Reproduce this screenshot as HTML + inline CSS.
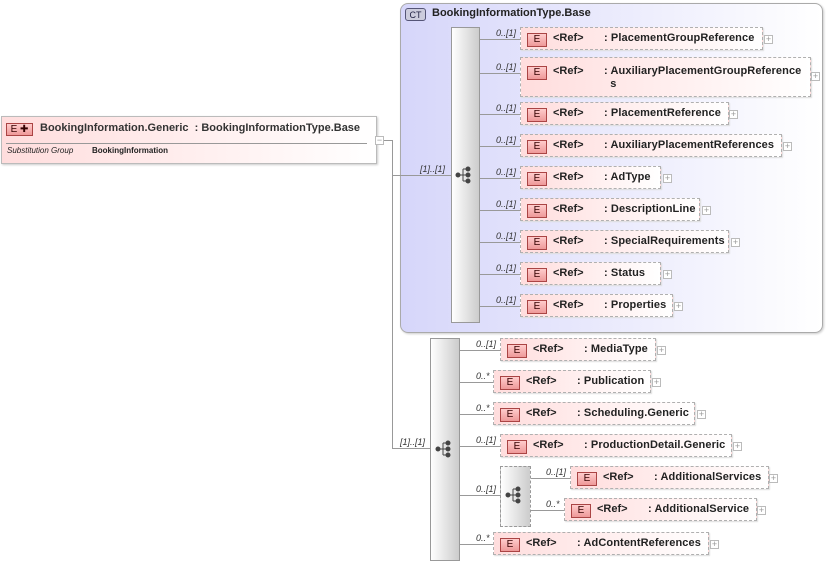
<!DOCTYPE html>
<html><head><meta charset="utf-8"><style>
body{margin:0;width:827px;height:565px;background:#fff;position:relative;overflow:hidden;font-family:"Liberation Sans",Arial,sans-serif;}
div{position:absolute;box-sizing:border-box;}
.l{background:#999;z-index:2;}
.el{border:1px dashed #b0b0b0;background:linear-gradient(90deg,#fdd 0%,#fff 100%);font-size:11px;font-weight:bold;color:#222;height:23px;box-shadow:1px 1px 1px #ddd;}
.el .e{left:6px;top:5px;width:20px;height:14px;border:1px solid #a44;background:linear-gradient(#fcc,#e99);font-size:10px;font-weight:normal;text-align:center;line-height:12px;color:#300;}
.el .r{left:32px;top:4px;}
.el .n{left:83px;top:4px;white-space:nowrap;letter-spacing:0.1px;}
.pl{width:9px;height:9px;border:1px solid #bbb;background:#fff;font-size:9px;line-height:7px;text-align:center;color:#999;z-index:2;}
.c{font-size:9px;font-style:italic;color:#333;white-space:nowrap;z-index:2;}
.seq{border:1px solid #999;background:linear-gradient(90deg,#fff,#ccc);}
</style></head><body>
<!-- main element -->
<div style="left:1px;top:116px;width:376px;height:48px;border:1px solid #bbb;background:linear-gradient(90deg,#fdd,#fff);box-shadow:1px 1px 2px #ccc"></div>
<div style="left:6px;top:123px;width:27px;height:13px;border:1px solid #a44;background:linear-gradient(#fcc,#e99);font-size:10px;text-align:center;line-height:11px;color:#300">E ✚</div>
<div style="left:40px;top:122px;font-size:11px;font-weight:bold;color:#333;white-space:nowrap">BookingInformation.Generic&nbsp; : BookingInformationType.Base</div>
<div style="left:6px;top:143px;width:361px;height:1px;background:#999"></div>
<div style="left:7px;top:146px;font-size:8px;font-style:italic;color:#222">Substitution Group</div>
<div style="left:92px;top:146px;font-size:8px;font-weight:bold;color:#222">BookingInformation</div>
<div class="pl" style="left:375px;top:136px;">−</div>
<div class="l" style="left:384px;top:140px;width:9px;height:1px"></div>
<div class="l" style="left:392px;top:140px;width:1px;height:309px"></div>
<!-- CT -->
<div style="left:400px;top:3px;width:423px;height:330px;border:1px solid #aaa;border-radius:8px;background:linear-gradient(90deg,#d6d6fa,#fff);box-shadow:1px 1px 2px #ccc"></div>
<div class="l" style="left:392px;top:175px;width:59px;height:1px"></div>
<div class="l" style="left:392px;top:448px;width:38px;height:1px"></div>
<div class="c" style="left:420px;top:164px">[1]..[1]</div>
<div class="c" style="left:400px;top:437px">[1]..[1]</div>
<div style="left:405px;top:8px;width:21px;height:13px;border:1px solid #557;border-radius:3px;background:#ccd;font-size:9px;text-align:center;line-height:12px;color:#224">CT</div>
<div style="left:432px;top:7px;font-size:11px;font-weight:bold;color:#222">BookingInformationType.Base</div>
<div class="seq" style="left:451px;top:27px;width:29px;height:296px"></div>
<svg style="position:absolute;left:455px;top:166px" width="20" height="18"><g fill="#444" stroke="#444"><circle cx="3" cy="9" r="2"/><line x1="3" y1="9" x2="8" y2="9"/><line x1="8" y1="3" x2="8" y2="15"/><line x1="8" y1="3" x2="12" y2="3"/><line x1="8" y1="9" x2="12" y2="9"/><line x1="8" y1="15" x2="12" y2="15"/><circle cx="13" cy="3" r="2"/><circle cx="13" cy="9" r="2"/><circle cx="13" cy="15" r="2"/></g></svg>
<div class="seq" style="left:430px;top:338px;width:30px;height:223px"></div>
<svg style="position:absolute;left:435px;top:440px" width="20" height="18"><g fill="#444" stroke="#444"><circle cx="3" cy="9" r="2"/><line x1="3" y1="9" x2="8" y2="9"/><line x1="8" y1="3" x2="8" y2="15"/><line x1="8" y1="3" x2="12" y2="3"/><line x1="8" y1="9" x2="12" y2="9"/><line x1="8" y1="15" x2="12" y2="15"/><circle cx="13" cy="3" r="2"/><circle cx="13" cy="9" r="2"/><circle cx="13" cy="15" r="2"/></g></svg>
<div style="left:500px;top:466px;width:31px;height:61px;border:1px dashed #999;background:linear-gradient(90deg,#fff,#ccc)"></div>
<svg style="position:absolute;left:505px;top:486px" width="20" height="18"><g fill="#444" stroke="#444"><circle cx="3" cy="9" r="2"/><line x1="3" y1="9" x2="8" y2="9"/><line x1="8" y1="3" x2="8" y2="15"/><line x1="8" y1="3" x2="12" y2="3"/><line x1="8" y1="9" x2="12" y2="9"/><line x1="8" y1="15" x2="12" y2="15"/><circle cx="13" cy="3" r="2"/><circle cx="13" cy="9" r="2"/><circle cx="13" cy="15" r="2"/></g></svg>

<!-- top rows -->
<div class="l" style="left:480px;top:39px;width:40px;height:1px"></div><div class="c" style="left:496px;top:28px">0..[1]</div>
<div class="el" style="left:520px;top:27px;width:243px"><div class="e">E</div><div class="r">&lt;Ref&gt;</div><div class="n">: PlacementGroupReference</div></div><div class="pl" style="left:764px;top:35px">+</div>

<div class="l" style="left:480px;top:73px;width:40px;height:1px"></div><div class="c" style="left:496px;top:62px">0..[1]</div>
<div class="el" style="left:520px;top:57px;width:291px;height:40px"><div class="e" style="top:8px">E</div><div class="r" style="top:7px">&lt;Ref&gt;</div><div class="n" style="top:7px;line-height:13px">: AuxiliaryPlacementGroupReference<br>&nbsp; s</div></div><div class="pl" style="left:811px;top:72px">+</div>

<div class="l" style="left:480px;top:114px;width:40px;height:1px"></div><div class="c" style="left:496px;top:103px">0..[1]</div>
<div class="el" style="left:520px;top:102px;width:209px"><div class="e">E</div><div class="r">&lt;Ref&gt;</div><div class="n">: PlacementReference</div></div><div class="pl" style="left:729px;top:110px">+</div>

<div class="l" style="left:480px;top:146px;width:40px;height:1px"></div><div class="c" style="left:496px;top:135px">0..[1]</div>
<div class="el" style="left:520px;top:134px;width:262px"><div class="e">E</div><div class="r">&lt;Ref&gt;</div><div class="n">: AuxiliaryPlacementReferences</div></div><div class="pl" style="left:783px;top:142px">+</div>

<div class="l" style="left:480px;top:178px;width:40px;height:1px"></div><div class="c" style="left:496px;top:167px">0..[1]</div>
<div class="el" style="left:520px;top:166px;width:141px"><div class="e">E</div><div class="r">&lt;Ref&gt;</div><div class="n">: AdType</div></div><div class="pl" style="left:663px;top:174px">+</div>

<div class="l" style="left:480px;top:210px;width:40px;height:1px"></div><div class="c" style="left:496px;top:199px">0..[1]</div>
<div class="el" style="left:520px;top:198px;width:180px"><div class="e">E</div><div class="r">&lt;Ref&gt;</div><div class="n">: DescriptionLine</div></div><div class="pl" style="left:702px;top:206px">+</div>

<div class="l" style="left:480px;top:242px;width:40px;height:1px"></div><div class="c" style="left:496px;top:231px">0..[1]</div>
<div class="el" style="left:520px;top:230px;width:209px"><div class="e">E</div><div class="r">&lt;Ref&gt;</div><div class="n">: SpecialRequirements</div></div><div class="pl" style="left:731px;top:238px">+</div>

<div class="l" style="left:480px;top:274px;width:40px;height:1px"></div><div class="c" style="left:496px;top:263px">0..[1]</div>
<div class="el" style="left:520px;top:262px;width:141px"><div class="e">E</div><div class="r">&lt;Ref&gt;</div><div class="n">: Status</div></div><div class="pl" style="left:663px;top:270px">+</div>

<div class="l" style="left:480px;top:306px;width:40px;height:1px"></div><div class="c" style="left:496px;top:295px">0..[1]</div>
<div class="el" style="left:520px;top:294px;width:153px"><div class="e">E</div><div class="r">&lt;Ref&gt;</div><div class="n">: Properties</div></div><div class="pl" style="left:674px;top:302px">+</div>

<!-- bottom rows -->
<div class="l" style="left:460px;top:350px;width:40px;height:1px"></div><div class="c" style="left:476px;top:339px">0..[1]</div>
<div class="el" style="left:500px;top:338px;width:156px"><div class="e">E</div><div class="r">&lt;Ref&gt;</div><div class="n">: MediaType</div></div><div class="pl" style="left:657px;top:346px">+</div>

<div class="l" style="left:460px;top:382px;width:33px;height:1px"></div><div class="c" style="left:476px;top:371px">0..*</div>
<div class="el" style="left:493px;top:370px;width:158px"><div class="e">E</div><div class="r">&lt;Ref&gt;</div><div class="n">: Publication</div></div><div class="pl" style="left:652px;top:378px">+</div>

<div class="l" style="left:460px;top:414px;width:33px;height:1px"></div><div class="c" style="left:476px;top:403px">0..*</div>
<div class="el" style="left:493px;top:402px;width:202px"><div class="e">E</div><div class="r">&lt;Ref&gt;</div><div class="n">: Scheduling.Generic</div></div><div class="pl" style="left:697px;top:410px">+</div>

<div class="l" style="left:460px;top:446px;width:40px;height:1px"></div><div class="c" style="left:476px;top:435px">0..[1]</div>
<div class="el" style="left:500px;top:434px;width:232px"><div class="e">E</div><div class="r">&lt;Ref&gt;</div><div class="n">: ProductionDetail.Generic</div></div><div class="pl" style="left:733px;top:442px">+</div>

<div class="l" style="left:460px;top:495px;width:40px;height:1px"></div><div class="c" style="left:476px;top:484px">0..[1]</div>

<div class="l" style="left:531px;top:478px;width:39px;height:1px"></div><div class="c" style="left:546px;top:467px">0..[1]</div>
<div class="el" style="left:570px;top:466px;width:199px"><div class="e">E</div><div class="r">&lt;Ref&gt;</div><div class="n">: AdditionalServices</div></div><div class="pl" style="left:769px;top:474px">+</div>

<div class="l" style="left:531px;top:510px;width:33px;height:1px"></div><div class="c" style="left:546px;top:499px">0..*</div>
<div class="el" style="left:564px;top:498px;width:193px"><div class="e">E</div><div class="r">&lt;Ref&gt;</div><div class="n">: AdditionalService</div></div><div class="pl" style="left:757px;top:506px">+</div>

<div class="l" style="left:460px;top:544px;width:33px;height:1px"></div><div class="c" style="left:476px;top:533px">0..*</div>
<div class="el" style="left:493px;top:532px;width:216px"><div class="e">E</div><div class="r">&lt;Ref&gt;</div><div class="n">: AdContentReferences</div></div><div class="pl" style="left:710px;top:540px">+</div>
</body></html>
